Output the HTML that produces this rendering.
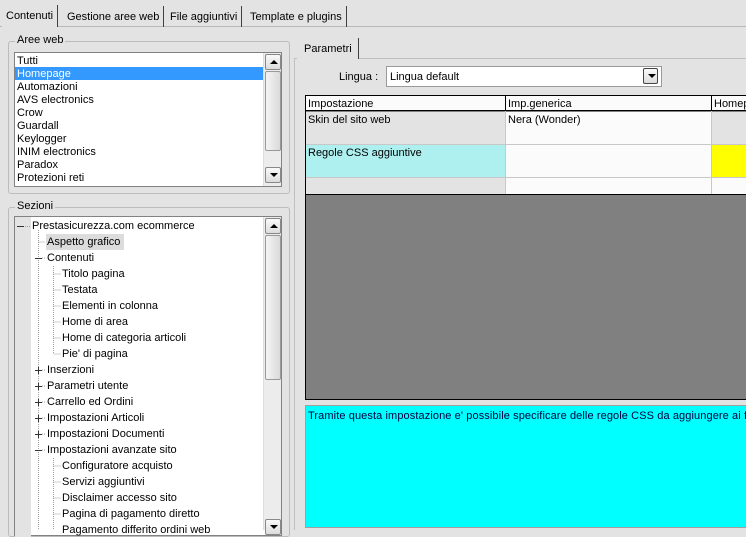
<!DOCTYPE html>
<html><head><style>
*{box-sizing:border-box;margin:0;padding:0}
body{width:746px;height:530px;overflow:hidden;background:#e3e3e3;font:11px "Liberation Sans",sans-serif;color:#000;position:relative}
.a{position:absolute}
.tab{position:absolute;top:6px;height:21px;border-right:1px solid #404040;padding:5px 4px 0 4px;white-space:nowrap}
.grp{position:absolute;border:1px solid #bcbcbc;border-radius:3px}
.lg{position:absolute;background:#e3e3e3;padding:0 2px;top:-8px;left:6px}
.sb{position:absolute;width:18px;background:#ececec;border-left:1px solid #ddd}
.btn{position:absolute;left:1px;width:16px;height:16px;border:1px solid #888;border-radius:2px;background:linear-gradient(#fafafa,#dcdcdc)}
.thumb{position:absolute;left:1px;width:16px;border:1px solid #999;border-radius:2px;background:linear-gradient(90deg,#f4f4f4,#dadada)}
.t{position:absolute;white-space:nowrap;line-height:13px}
.up:after,.dn:after{content:"";position:absolute;left:4px;border-left:4px solid transparent;border-right:4px solid transparent}
.up:after{top:5px;border-bottom:4px solid #000}
.dn:after{top:5px;border-top:4px solid #000}
</style></head><body>
<div class="a" style="left:0;top:26px;width:746px;height:1px;background:#b8b8b8"></div>
<div class="tab" style="left:2px;height:22px;top:5px;background:#e3e3e3">Contenuti</div>
<div class="tab" style="left:63px">Gestione aree web</div>
<div class="tab" style="left:166px">File aggiuntivi</div>
<div class="tab" style="left:246px">Template e plugins</div>

<div class="grp" style="left:8px;top:41px;width:282px;height:153px"><div class="lg">Aree web</div></div>
<div class="a" style="left:14px;top:52px;width:268px;height:135px;background:#fff;border:1px solid #828282"></div>
<div class="a" style="left:15px;top:67px;width:248px;height:13px;background:#3399ff"></div>
<div class="t" style="left:17px;top:55px">Tutti</div>
<div class="t" style="left:17px;top:68px;color:#fff">Homepage</div>
<div class="t" style="left:17px;top:81px">Automazioni</div>
<div class="t" style="left:17px;top:94px">AVS electronics</div>
<div class="t" style="left:17px;top:107px">Crow</div>
<div class="t" style="left:17px;top:120px">Guardall</div>
<div class="t" style="left:17px;top:133px">Keylogger</div>
<div class="t" style="left:17px;top:146px">INIM electronics</div>
<div class="t" style="left:17px;top:159px">Paradox</div>
<div class="t" style="left:17px;top:172px">Protezioni reti</div>
<div class="sb" style="left:263px;top:53px;height:133px">
<div class="btn up" style="top:1px"></div>
<div class="thumb" style="top:18px;height:80px"></div>
<div class="btn dn" style="top:114px"></div></div>

<div class="grp" style="left:8px;top:207px;width:282px;height:330px"><div class="lg">Sezioni</div></div>
<div class="a" style="left:14px;top:216px;width:268px;height:320px;background:#fff;border:1px solid #828282"></div>
<div class="a" style="left:15px;top:217px;width:16px;height:320px;background:#e3e3e3"></div>
<div class="a" style="left:46px;top:234px;width:78px;height:16px;background:#dcdcdc"></div>
<svg class="a" style="left:15px;top:217px" width="60" height="313">
<g fill="none" stroke="#a0a0a0" stroke-dasharray="1 1">
<path d="M23.5 13V313M23.5 25H30M27 41H31M27 153H31M27 169H31M27 185H31M27 201H31M27 217H31M27 233H31M38.5 49V137M38.5 57H46M38.5 73H46M38.5 89H46M38.5 105H46M38.5 121H46M38.5 137H46M38.5 241V313M38.5 249H46M38.5 265H46M38.5 281H46M38.5 297H46M10 9.5H16"/></g>
<g fill="none" stroke="#333"><path d="M2 9.5H9M20 41.5H27M20 153.5H27M20 169.5H27M20 185.5H27M20 201.5H27M20 217.5H27M20 233.5H27M23.5 150V157M23.5 166V173M23.5 182V189M23.5 198V205M23.5 214V221"/></g>
</svg>
<div class="t" style="left:32px;top:220px">Prestasicurezza.com ecommerce</div>
<div class="t" style="left:47px;top:236px">Aspetto grafico</div>
<div class="t" style="left:47px;top:252px">Contenuti</div>
<div class="t" style="left:62px;top:268px">Titolo pagina</div>
<div class="t" style="left:62px;top:284px">Testata</div>
<div class="t" style="left:62px;top:300px">Elementi in colonna</div>
<div class="t" style="left:62px;top:316px">Home di area</div>
<div class="t" style="left:62px;top:332px">Home di categoria articoli</div>
<div class="t" style="left:62px;top:348px">Pie' di pagina</div>
<div class="t" style="left:47px;top:364px">Inserzioni</div>
<div class="t" style="left:47px;top:380px">Parametri utente</div>
<div class="t" style="left:47px;top:396px">Carrello ed Ordini</div>
<div class="t" style="left:47px;top:412px">Impostazioni Articoli</div>
<div class="t" style="left:47px;top:428px">Impostazioni Documenti</div>
<div class="t" style="left:47px;top:444px">Impostazioni avanzate sito</div>
<div class="t" style="left:62px;top:460px">Configuratore acquisto</div>
<div class="t" style="left:62px;top:476px">Servizi aggiuntivi</div>
<div class="t" style="left:62px;top:492px">Disclaimer accesso sito</div>
<div class="t" style="left:62px;top:508px">Pagina di pagamento diretto</div>
<div class="t" style="left:62px;top:524px">Pagamento differito ordini web</div>
<div class="sb" style="left:263px;top:217px;height:313px">
<div class="btn up" style="top:1px"></div>
<div class="thumb" style="top:18px;height:145px"></div>
<div class="btn dn" style="top:302px"></div></div>

<div class="a" style="left:294px;top:58px;width:452px;height:472px;border:1px solid #c0c0c0;border-right:none;border-bottom:none"></div>
<div class="a" style="left:297px;top:38px;width:62px;height:21px;background:#e3e3e3;border-right:1px solid #404040;padding:5px 0 0 7px">Parametri</div>
<div class="t" style="left:339px;top:71px">Lingua :</div>
<div class="a" style="left:386px;top:66px;width:276px;height:21px;background:#fff;border:1px solid #9a9a9a;padding:4px 0 0 3px">Lingua default</div>
<div class="btn dn" style="left:643px;top:68px;width:15px;height:16px;border-color:#444"></div>

<div class="a" style="left:305px;top:95px;width:441px;height:305px;background:#808080;border:1px solid #000;border-right:none"></div>
<div class="a" style="left:306px;top:96px;width:440px;height:15px;background:#fbfbfb;border-bottom:1px solid #000"></div>
<div class="a" style="left:306px;top:112px;width:200px;height:33px;background:#e3e3e3"></div>
<div class="a" style="left:506px;top:112px;width:205px;height:33px;background:#fbfbfb"></div>
<div class="a" style="left:712px;top:112px;width:34px;height:33px;background:#e3e3e3"></div>
<div class="a" style="left:306px;top:145px;width:200px;height:33px;background:#aef0f0"></div>
<div class="a" style="left:506px;top:145px;width:205px;height:33px;background:#fbfbfb"></div>
<div class="a" style="left:712px;top:145px;width:34px;height:33px;background:#ffff00"></div>
<div class="a" style="left:306px;top:178px;width:200px;height:16px;background:#e3e3e3"></div>
<div class="a" style="left:506px;top:178px;width:240px;height:16px;background:#fbfbfb"></div>
<div class="a" style="left:306px;top:194px;width:440px;height:1px;background:#000"></div>
<div class="a" style="left:306px;top:144px;width:440px;height:1px;background:#c8c8c8"></div>
<div class="a" style="left:306px;top:177px;width:440px;height:1px;background:#c8c8c8"></div>
<div class="a" style="left:505px;top:96px;width:1px;height:98px;background:#c8c8c8"></div>
<div class="a" style="left:711px;top:96px;width:1px;height:98px;background:#c8c8c8"></div>
<div class="a" style="left:505px;top:96px;width:1px;height:15px;background:#000"></div>
<div class="a" style="left:711px;top:96px;width:1px;height:15px;background:#000"></div>
<div class="t" style="left:308px;top:98px">Impostazione</div>
<div class="t" style="left:508px;top:98px">Imp.generica</div>
<div class="t" style="left:714px;top:98px">Homepage</div>
<div class="t" style="left:308px;top:114px">Skin del sito web</div>
<div class="t" style="left:508px;top:114px">Nera (Wonder)</div>
<div class="t" style="left:308px;top:147px">Regole CSS aggiuntive</div>

<div class="a" style="left:305px;top:405px;width:441px;height:123px;background:#00ffff;border:1px solid #a0a0a0;border-right:none;padding:4px 0 0 2px;white-space:nowrap;overflow:hidden;color:#000040;letter-spacing:0.1px">Tramite questa impostazione e' possibile specificare delle regole CSS da aggiungere ai fogli di stile</div>
</body></html>
